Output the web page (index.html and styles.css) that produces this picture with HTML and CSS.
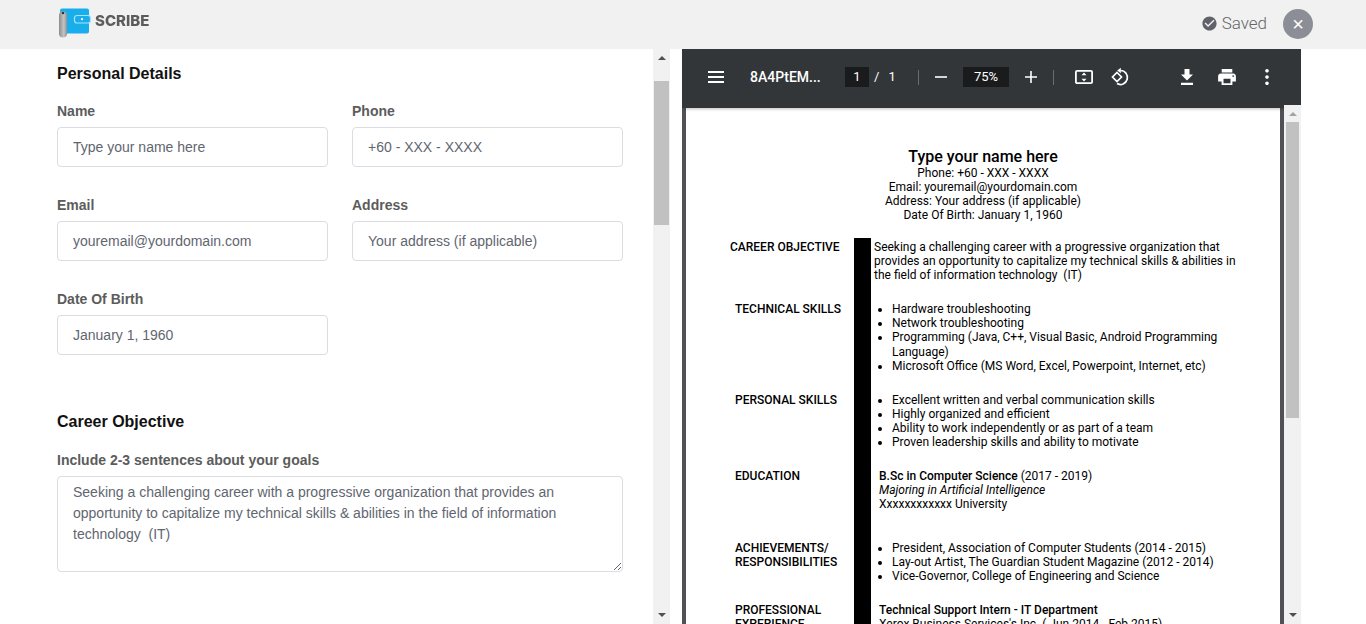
FILE: index.html
```html
<!DOCTYPE html>
<html lang="en">
  <head>
    <meta charset="UTF-8" />
    <title>Scribe</title>
    <link rel="stylesheet" href="styles.css">
  </head>
  <body>
    <header class="topbar">
      <div class="logo">
        <svg class="logo_mark" viewBox="0 0 36 32" width="36" height="32">
          <defs>
            <linearGradient id="roll" x1="0" y1="0" x2="1" y2="0">
              <stop offset="0" stop-color="#8c8c8c"></stop>
              <stop offset="0.6" stop-color="#c4c4c4"></stop>
              <stop offset="1" stop-color="#8f8f8f"></stop>
            </linearGradient>
          </defs>
          <rect x="3" y="0.500" width="29" height="25" rx="2" fill="#18aeec"></rect>
          <rect x="2" y="3.500" width="8" height="26" rx="4" fill="url(#roll)"></rect>
          <circle cx="6" cy="5" r="1.300" fill="#333"></circle>
          <rect x="17.500" y="7.500" width="16" height="7.500" rx="2.500" fill="#18aeec" stroke="#a8e2fa" stroke-width="1.200"></rect>
          <circle cx="25" cy="11.200" r="1.100" fill="#fff"></circle>
        </svg>
        <span class="logo_text">SCRIBE</span>
      </div>
      <div class="status">
        <svg viewBox="0 0 24 24" width="17" height="17" fill="#5f6368"><path d="M12 2C6.48 2 2 6.48 2 12s4.48 10 10 10 10-4.48 10-10S17.52 2 12 2zm-2 15l-5-5 1.41-1.41L10 14.17l7.59-7.59L19 8l-9 9z"></path></svg>
        <span class="status_text">Saved</span>
        <button class="close">&#215;</button>
      </div>
    </header>

    <main class="content">
      <section class="editor">
        <form class="form">
          <h2 class="form_title">Personal Details</h2>
          <div class="form_grid">
            <div class="field">
              <label>Name</label>
              <input type="text" value="Type your name here" />
            </div>
            <div class="field">
              <label>Phone</label>
              <input type="text" value="+60 - XXX - XXXX" />
            </div>
            <div class="field">
              <label>Email</label>
              <input type="text" value="youremail@yourdomain.com" />
            </div>
            <div class="field">
              <label>Address</label>
              <input type="text" value="Your address (if applicable)" />
            </div>
            <div class="field">
              <label>Date Of Birth</label>
              <input type="text" value="January 1, 1960" />
            </div>
          </div>
          <h2 class="form_title form_title_next">Career Objective</h2>
          <div class="field">
            <label>Include 2-3 sentences about your goals</label>
            <textarea>Seeking a challenging career with a progressive organization that provides an opportunity to capitalize my technical skills &amp; abilities in the field of information technology  (IT)</textarea>
          </div>
        </form>
        <div class="scroll">
          <span class="scroll_up"></span>
          <span class="scroll_thumb scroll_thumb_form"></span>
          <span class="scroll_down"></span>
        </div>
      </section>

      <section class="viewer">
        <div class="toolbar">
          <svg class="tool tool_menu" viewBox="0 0 24 24" fill="#fff"><path d="M4 18h16v-2H4v2zm0-5h16v-2H4v2zm0-7v2h16V6H4z"></path></svg>
          <span class="doc_name">8A4PtEM...</span>
          <span class="page_box">1</span>
          <span class="page_total"><i>/</i>1</span>
          <span class="sep"></span>
          <svg class="tool tool_minus" viewBox="0 0 24 24" fill="#fff"><path d="M6 11.200h12v1.600H6z"></path></svg>
          <span class="zoom_box">75%</span>
          <svg class="tool tool_plus" viewBox="0 0 24 24" fill="#fff"><path d="M18 12.800h-5.200V18h-1.600v-5.200H6v-1.600h5.200V6h1.600v5.200H18z"></path></svg>
          <span class="sep sep_second"></span>
          <svg class="tool tool_fit" viewBox="0 0 24 24" fill="none" stroke="#fff" stroke-width="1.800"><rect x="3.900" y="5.900" width="16.200" height="12.200" rx="1.200"></rect><path d="M12 7.500l2.500 2.800h-5zM12 16.500l2.500-2.800h-5z" fill="#fff" stroke="none"></path></svg>
          <svg class="tool tool_rotate" viewBox="0 0 24 24" fill="none" stroke="#fff" stroke-width="1.700"><path d="M9 7.500l4.500 4.500-4.500 4.500-4.500-4.500z"></path><path d="M12.500 5.500a7 7 0 1 1-3.500 13.100"></path><path d="M12.800 2.800v5.400l-3.600-2.700z" fill="#fff" stroke="none"></path></svg>
          <svg class="tool tool_save" viewBox="0 0 24 24" fill="#fff"><path d="M18 9.500h-3.500V4h-5v5.500H6l6 6 6-6zM6 17.800V20h12v-2.200H6z"></path></svg>
          <svg class="tool tool_print" viewBox="0 0 24 24" fill="#fff"><path d="M18.200 8.500H5.800c-1.500 0-2.700 1.200-2.700 2.700v5.300h3.500v3.600h10.800v-3.600h3.500v-5.300c0-1.500-1.200-2.700-2.700-2.700zm-2.700 9.800h-7v-4.500h7v4.500zm2.700-6.300c-.5 0-.9-.4-.9-.9s.4-.9.900-.9.900.4.900.9-.4.900-.9.900zm-.9-8H6.700v3.600h10.600V4z"></path></svg>
          <svg class="tool tool_more" viewBox="0 0 24 24" fill="#fff"><path d="M12 7.600c1 0 1.800-.8 1.800-1.800S13 4 12 4s-1.800.8-1.800 1.800.8 1.800 1.800 1.800zm0 2.600c-1 0-1.800.8-1.800 1.800s.8 1.800 1.800 1.800 1.800-.8 1.800-1.800-.8-1.800-1.800-1.800zm0 6.200c-1 0-1.800.8-1.800 1.800S11 20 12 20s1.800-.8 1.800-1.800-.8-1.800-1.800-1.800z"></path></svg>
        </div>
        <div class="sheet_area">
          <div class="sheet">
            <div class="cv_head">
              <h1>Type your name here</h1>
              <p>Phone: +60 - XXX - XXXX</p>
              <p>Email: youremail@yourdomain.com</p>
              <p>Address: Your address (if applicable)</p>
              <p>Date Of Birth: January 1, 1960</p>
            </div>
            <div class="cv_row">
              <div class="cv_label cv_label_wide">CAREER OBJECTIVE</div>
              <div class="cv_body">Seeking a challenging career with a progressive organization that provides an opportunity to capitalize my technical skills &amp; abilities in the field of information technology &nbsp;(IT)</div>
            </div>
            <div class="cv_row">
              <div class="cv_label">TECHNICAL SKILLS</div>
              <div class="cv_body">
                <ul>
                  <li>Hardware troubleshooting</li>
                  <li>Network troubleshooting</li>
                  <li class="cv_item_wrapped">Programming (Java, C++, Visual Basic, Android Programming Language)</li>
                  <li>Microsoft Office (MS Word, Excel, Powerpoint, Internet, etc)</li>
                </ul>
              </div>
            </div>
            <div class="cv_row">
              <div class="cv_label">PERSONAL SKILLS</div>
              <div class="cv_body">
                <ul>
                  <li>Excellent written and verbal communication skills</li>
                  <li>Highly organized and efficient</li>
                  <li>Ability to work independently or as part of a team</li>
                  <li>Proven leadership skills and ability to motivate</li>
                </ul>
              </div>
            </div>
            <div class="cv_row">
              <div class="cv_label">EDUCATION</div>
              <div class="cv_body cv_body_text cv_body_tall">
                <p><b>B.Sc in Computer Science</b> (2017 - 2019)</p>
                <p><em>Majoring in Artificial Intelligence</em></p>
                <p>Xxxxxxxxxxxx University</p>
              </div>
            </div>
            <div class="cv_row">
              <div class="cv_label">ACHIEVEMENTS/<br />RESPONSIBILITIES</div>
              <div class="cv_body">
                <ul>
                  <li>President, Association of Computer Students (2014 - 2015)</li>
                  <li>Lay-out Artist, The Guardian Student Magazine (2012 - 2014)</li>
                  <li>Vice-Governor, College of Engineering and Science</li>
                </ul>
              </div>
            </div>
            <div class="cv_row">
              <div class="cv_label">PROFESSIONAL<br />EXPERIENCE</div>
              <div class="cv_body cv_body_text">
                <p><b>Technical Support Intern - IT Department</b></p>
                <p>Xerox Business Services's Inc. ( Jun 2014 - Feb 2015)</p>
              </div>
            </div>
          </div>
          <div class="scroll scroll_pdf">
            <span class="scroll_up"></span>
            <span class="scroll_thumb scroll_thumb_pdf"></span>
            <span class="scroll_down"></span>
          </div>
        </div>
      </section>
    </main>
  </body>
</html>
```

FILE: styles.css
```css
*,
*:before,
*:after {
  box-sizing: border-box;
}
html,
body {
  height: 100%;
  margin: 0;
  overflow: hidden;
}
body {
  display: flex;
  flex-direction: column;
  background: #fff;
  font: 14px/1.2 "Liberation Sans", Arial, sans-serif;
}

/* top bar */
.topbar {
  flex: 0 0 49px;
  display: flex;
  align-items: center;
  justify-content: space-between;
  padding: 0 53px 2px 57px;
  background: #f1f1f1;
}
.logo {
  display: flex;
  align-items: flex-start;
  gap: 2px;
}
.logo_mark {
  filter: blur(0.4px);
}
.logo_text {
  margin-top: 5px;
  font: 800 15px/1 Inter, sans-serif;
  color: #5c5c5c;
  filter: blur(0.3px);
}
.status {
  display: flex;
  align-items: center;
}
.status_text {
  margin: 0 16px 0 4px;
  font: 300 17px/1 Roboto, sans-serif;
  color: #666;
}
.close {
  width: 30px;
  height: 30px;
  padding: 0;
  border: 0;
  border-radius: 50%;
  background: #8b8e96;
  color: #fff;
  font: 20px/30px "Liberation Sans", sans-serif;
}

.content {
  flex: 1;
  display: flex;
  gap: 12px;
  min-height: 0;
}

/* form side */
.editor {
  flex: 0 0 670px;
  display: flex;
  min-height: 0;
}
.form {
  flex: 1;
  padding: 15px 0 0 57px;
  overflow: hidden;
}
.form_title {
  margin: 0 0 19px;
  font: 700 16px/20px "Liberation Sans", Arial, sans-serif;
  color: #111;
}
.form_title_next {
  margin: 57px 0 20px;
}
.form_grid {
  display: grid;
  grid-template-columns: 271px 271px;
  gap: 30px 24px;
}
.field label {
  display: block;
  margin-bottom: 8px;
  font: 700 14px/16px "Liberation Sans", Arial, sans-serif;
  color: #5c5c5c;
}
.field input,
.field textarea {
  display: block;
  width: 100%;
  border: 1px solid #dcdce4;
  border-radius: 4px;
  background: #fff;
  color: #5f6670;
  font: 14px/21px "Liberation Sans", Arial, sans-serif;
  outline: none;
}
.field input {
  height: 40px;
  padding: 0 15px;
}
.field textarea {
  width: 566px;
  height: 96px;
  padding: 5px 15px;
}

/* fake scrollbars, the picture never scrolls */
.scroll {
  flex: 0 0 17px;
  display: flex;
  flex-direction: column;
  align-items: center;
  background: #f1f1f1;
  padding: 0 1px;
}
.scroll_up {
  margin-top: 7px;
  border: 4px solid transparent;
  border-top: 0;
  border-bottom: 4px solid #505050;
}
.scroll_down {
  margin-top: auto;
  margin-bottom: 7px;
  border: 4px solid transparent;
  border-bottom: 0;
  border-top: 4px solid #505050;
}
.scroll_thumb {
  width: 100%;
  background: #c1c1c1;
}
.scroll_thumb_form {
  margin-top: 21px;
  height: 144px;
}
.scroll_thumb_pdf {
  margin-top: 6px;
  height: 296px;
}
.scroll_pdf {
  position: relative;
  z-index: 2;
  margin-top: -3px;
  padding: 0 2px;
}
.scroll_pdf .scroll_up {
  border-bottom-color: #a3a3a3;
}

/* pdf viewer */
.viewer {
  flex: 0 0 619px;
  display: flex;
  flex-direction: column;
  min-height: 0;
}
.toolbar {
  position: relative;
  z-index: 1;
  flex: 0 0 59px;
  display: flex;
  align-items: center;
  padding: 0 0 3px 22px;
  background: #323639;
  box-shadow: 0 3px 3px -2px rgba(0, 0, 0, 0.25);
  color: #fff;
  font-family: Roboto, sans-serif;
}
.tool {
  flex: 0 0 24px;
  width: 24px;
  height: 24px;
}
.doc_name {
  width: 70px;
  margin-left: 22px;
  font-size: 14px;
  font-weight: 500;
  white-space: nowrap;
}
.page_box {
  width: 24px;
  height: 20px;
  margin-left: 25px;
  background: #191b1c;
  font-size: 13px;
  line-height: 20px;
  text-align: center;
}
.page_total {
  width: 49px;
  padding-left: 5px;
  font-size: 13px;
}
.page_total i {
  margin-right: 9px;
  font-style: normal;
}
.sep {
  width: 1px;
  height: 15px;
  background: #6a6d70;
}
.tool_minus {
  margin-left: 10px;
}
.zoom_box {
  width: 46px;
  height: 20px;
  margin-left: 10px;
  background: #191b1c;
  font-size: 13px;
  line-height: 20px;
  text-align: center;
}
.tool_plus,
.sep_second {
  margin-left: 10px;
}
.tool_fit {
  margin-left: 18px;
}
.tool_rotate {
  margin-left: 12px;
}
.tool_save {
  margin-left: 43px;
}
.tool_print,
.tool_more {
  margin-left: 16px;
}
.sheet_area {
  flex: 1;
  display: flex;
  min-height: 0;
  background: #4f5154;
  padding-left: 4px;
}
.sheet {
  flex: 0 0 594px;
  margin-right: 4px;
  padding-top: 39px;
  overflow: hidden;
  background: #fff;
  color: #000;
  font: 12px/14px Roboto, sans-serif;
}
.sheet p {
  margin: 0;
}
.cv_head {
  margin-bottom: 16px;
  text-align: center;
}
.cv_head h1 {
  margin: 0;
  font-size: 16px;
  font-weight: 500;
  line-height: 19px;
}
.cv_row {
  display: flex;
}
.cv_label {
  flex: 0 0 168px;
  padding: 2px 0 0 49px;
  font-weight: 500;
  white-space: nowrap;
}
.cv_label_wide {
  padding-left: 44px;
}
.cv_body {
  flex: 0 0 386px;
  padding: 2px 0 18px 3px;
  border-left: 17px solid #000;
}
.cv_body_text {
  padding-left: 8px;
}
.cv_body_tall {
  padding-bottom: 28px;
}
.cv_body b {
  font-weight: 500;
}
.cv_body ul {
  margin: 0;
  padding-left: 18px;
}
.cv_item_wrapped {
  line-height: 14.5px;
}
```
